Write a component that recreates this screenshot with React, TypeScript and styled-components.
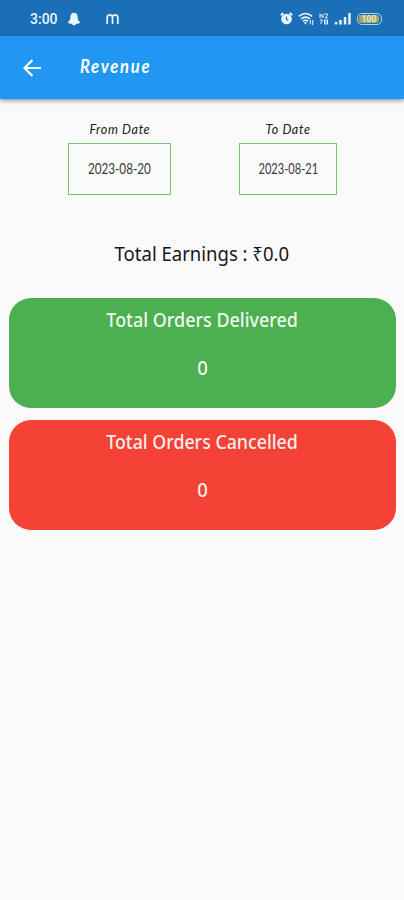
import React from "react";
import styled, { createGlobalStyle } from "styled-components";

const GlobalStyle = createGlobalStyle`
  * { box-sizing: border-box; }
  body { margin: 0; background: #fafafa; }
`;

const Screen = styled.div`
  width: 404px;
  height: 900px;
  overflow: hidden;
  background: #fafafa;
  color: #202020;
  font-family: "Noto Sans", sans-serif;
`;

const StatusBar = styled.div`
  height: 36px;
  padding: 1px 22px 0 30px;
  display: flex;
  align-items: center;
  justify-content: space-between;
  background: #1b6fb7;
  color: #e9f5ff;
`;

const StatusGroup = styled.div<{ $gap: number }>`
  display: flex;
  align-items: center;
  gap: ${(p) => p.$gap}px;
`;

const Clock = styled.span`
  width: 28px;
  font: 500 14px/16px Roboto, sans-serif;
  white-space: nowrap;
`;

const MonogramSlot = styled.div`
  display: flex;
  padding-left: 16px;
`;

const AppBar = styled.header`
  height: 63px;
  display: flex;
  align-items: center;
  padding-left: 23px;
  gap: 39px;
  background: #2196f3;
  color: #ffffff;
  box-shadow: 0 2px 4px rgba(0, 0, 0, 0.38);
`;

const Script = styled.span<{ $size: number; $stretch: number; $weight?: number; $tracking?: number }>`
  display: inline-block;
  font-family: Lato, sans-serif;
  font-style: italic;
  font-size: ${(p) => p.$size}px;
  font-weight: ${(p) => p.$weight ?? 400};
  line-height: 20px;
  letter-spacing: ${(p) => p.$tracking ?? 0}px;
  white-space: nowrap;
  transform: scaleX(${(p) => p.$stretch});
`;

const Title = styled(Script)`
  margin-bottom: 3px;
  transform-origin: left;
`;

const DateValue = styled(Script)`
  margin-bottom: 2px;
  font-style: normal;
`;

const Dates = styled.section`
  display: flex;
  gap: 68px;
  padding: 20px 0 0 68px;
`;

const DateField = styled.div<{ $width: number }>`
  width: ${(p) => p.$width}px;
  display: flex;
  flex-direction: column;
  align-items: center;
  gap: 4px;
`;

const DateBox = styled.div`
  width: 100%;
  height: 52px;
  display: flex;
  justify-content: center;
  align-items: center;
  border: 1px solid #78c27b;
  color: #3a3a3a;
`;

const Label = styled.div<{ $stretch: number; $weight?: number }>`
  font-size: 19.5px;
  line-height: 28px;
  font-weight: ${(p) => p.$weight ?? 400};
  white-space: nowrap;
  transform: scaleX(${(p) => p.$stretch});
`;

const Earnings = styled.section`
  height: 102px;
  padding-top: 45px;
  display: flex;
  justify-content: center;
  color: #181818;
`;

const Cards = styled.section`
  display: flex;
  flex-direction: column;
  gap: 11.5px;
  padding: 0.5px 8px 0 9px;
`;

const Card = styled.article<{ $color: string }>`
  height: 110.5px;
  padding-top: 8.5px;
  display: flex;
  flex-direction: column;
  align-items: center;
  gap: 20px;
  border-radius: 22px;
  background: ${(p) => p.$color};
  color: rgba(255, 255, 255, 0.93);
`;

const Bell = () => (
  <svg width="14" height="14" viewBox="0 0 14 14" fill="currentColor">
    <path d="M7 .8C4.6.8 3.3 2.6 3.3 4.8v2.1L.8 10.8c1 .9 2.4.9 3.8.9.6.9 1.4 1.5 2.4 1.5s1.8-.6 2.4-1.5c1.4 0 2.800 0 3.800-.9l-2.500-3.900V4.800C10.700 2.600 9.400.8 7 .8Z" />
  </svg>
);

const Monogram = () => (
  <svg width="13" height="12" viewBox="0 0 13 12" fill="none" stroke="currentColor" strokeWidth="1.7">
    <path d="M1.200 11V4.500Q1.200 1.800 3.800 1.800T6.500 4.500V11M6.500 4.500Q6.500 1.800 9.100 1.800T11.800 4.500V11" />
  </svg>
);

const Alarm = () => (
  <svg width="13" height="13" viewBox="0 0 13 13">
    <circle cx="6.500" cy="7" r="5.300" fill="currentColor" />
    <path d="M1 3.200 3.200 1M12 3.200 9.800 1" stroke="currentColor" strokeWidth="2.200" />
    <path d="M6.500 4.500v3l1.800.8" fill="none" stroke="#1b6fb7" strokeWidth="1.200" />
  </svg>
);

const Wifi = () => (
  <svg width="17" height="14" viewBox="0 0 17 14" fill="none" stroke="currentColor" strokeWidth="1.500">
    <path d="M.8 4.300q6.700-5.600 13.400 0M2.900 7q4.600-3.800 9.200 0M5 9.300q2.500-1.900 5 0" />
    <path d="m5.800 10.200 1.700 2.300 1.700-2.300z" fill="currentColor" stroke="none" />
    <path d="M12.300 8v4.500M14.700 8v5" strokeWidth="1" />
  </svg>
);

const Rate = () => (
  <svg width="10" height="12" viewBox="0 0 10 12" fill="none" stroke="currentColor" strokeWidth="1">
    <path d="M1 5.200V.8l3 4V.8M5.500 1h2.800v1.500L6 4.800h2.800M1 7h2.500L1.500 11M5.500 7h3v4h-3zM5.500 9h3" />
  </svg>
);

const Signal = () => (
  <svg width="18" height="13" viewBox="0 0 18 13" fill="currentColor">
    <path d="M.8 10h2.500v2.500H.8zM5.200 8h2.500v4.500H5.200zM9.800 5h2.500v7.500H9.800zM14.300 1h2.400v11.500h-2.400z" />
  </svg>
);

const BatteryShell = styled.div`
  width: 25px;
  height: 12px;
  margin-left: 1px;
  padding: 1px 2px 1px 1px;
  border: 1px solid #a9d5d8;
  border-radius: 5px;
  display: flex;
`;

const BatteryCharge = styled.div`
  flex: 1;
  display: flex;
  align-items: center;
  justify-content: center;
  border-radius: 3px;
  background: #a6a864;
  color: #f2f3d4;
  font: 500 8.5px/8px Roboto, sans-serif;
`;

const BackArrow = () => (
  <svg width="18" height="18" viewBox="0 0 18 18" fill="none" stroke="currentColor" strokeWidth="2.200">
    <path d="M18 9H1.700M9.500 1 1.500 9l8 8" />
  </svg>
);

export default function App() {
  return (
    <Screen>
      <GlobalStyle />
      <StatusBar>
        <StatusGroup $gap={9}>
          <Clock>3:00</Clock>
          <Bell />
          <MonogramSlot><Monogram /></MonogramSlot>
        </StatusGroup>
        <StatusGroup $gap={4.5}>
          <Alarm />
          <Wifi />
          <Rate />
          <Signal />
          <BatteryShell>
            <BatteryCharge>100</BatteryCharge>
          </BatteryShell>
        </StatusGroup>
      </StatusBar>
      <AppBar>
        <BackArrow />
        <Title $size={19.5} $stretch={0.85} $weight={700} $tracking={2}>Revenue</Title>
      </AppBar>
      <Dates>
        <DateField $width={103}>
          <Script $size={14} $stretch={0.9} $tracking={0.7}>From Date</Script>
          <DateBox><DateValue $size={15} $stretch={0.78}>2023-08-20</DateValue></DateBox>
        </DateField>
        <DateField $width={98}>
          <Script $size={14} $stretch={0.9} $tracking={0.7}>To Date</Script>
          <DateBox><DateValue $size={15} $stretch={0.74}>2023-08-21</DateValue></DateBox>
        </DateField>
      </Dates>
      <Earnings>
        <Label $stretch={0.95}>Total Earnings : ₹0.0</Label>
      </Earnings>
      <Cards>
        <Card $color="#4caf50">
          <Label $stretch={0.92} $weight={500}>Total Orders Delivered</Label>
          <Label $stretch={0.95} $weight={500}>0</Label>
        </Card>
        <Card $color="#f44336">
          <Label $stretch={0.912} $weight={500}>Total Orders Cancelled</Label>
          <Label $stretch={0.95} $weight={500}>0</Label>
        </Card>
      </Cards>
    </Screen>
  );
}
